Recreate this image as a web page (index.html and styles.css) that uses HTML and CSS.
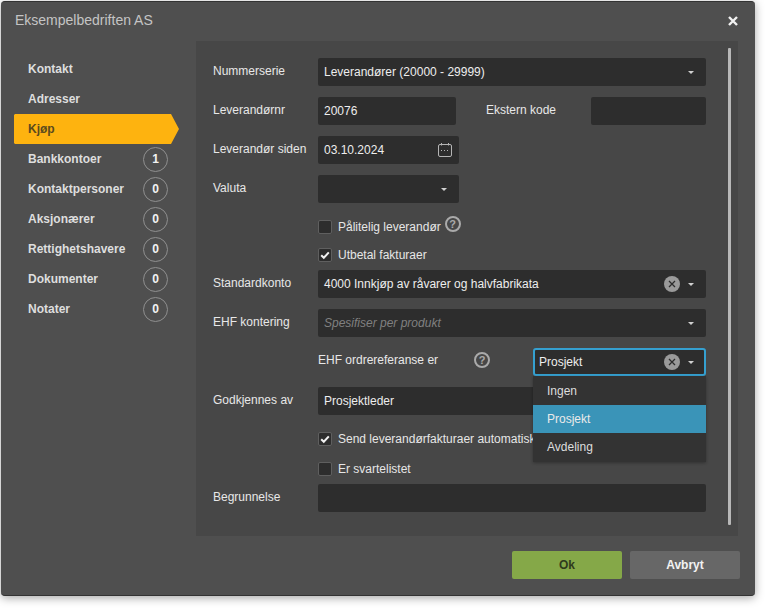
FILE: index.html
```html
<!DOCTYPE html>
<html lang="no">
<head>
<meta charset="utf-8">
<title>Eksempelbedriften AS</title>
<link rel="stylesheet" href="styles.css">
</head>
<body>
<div class="dialog">
  <header class="head">
    <span class="title">Eksempelbedriften AS</span>
    <svg class="close" width="12" height="12" viewBox="0 0 12 12"><path d="M2 2l8 8M10 2l-8 8" stroke="#f2f2f2" stroke-width="2.4" fill="none"/></svg>
  </header>
  <div class="main">
    <nav class="nav">
      <a class="item">Kontakt</a>
      <a class="item">Adresser</a>
      <a class="item active">Kjøp</a>
      <a class="item">Bankkontoer<b class="badge">1</b></a>
      <a class="item">Kontaktpersoner<b class="badge">0</b></a>
      <a class="item">Aksjonærer<b class="badge">0</b></a>
      <a class="item">Rettighetshavere<b class="badge">0</b></a>
      <a class="item">Dokumenter<b class="badge">0</b></a>
      <a class="item">Notater<b class="badge">0</b></a>
    </nav>
    <section class="panel">
      <div class="row">
        <label class="lab">Nummerserie</label>
        <div class="field grow"><span class="val">Leverandører (20000 - 29999)</span><i class="caret"></i></div>
      </div>
      <div class="row">
        <label class="lab">Leverandørnr</label>
        <div class="field w138"><span class="val">20076</span></div>
        <label class="lab ext">Ekstern kode</label>
        <div class="field w115"></div>
      </div>
      <div class="row">
        <label class="lab">Leverandør siden</label>
        <div class="field w141"><span class="val">03.10.2024</span>
          <svg class="cal" width="16" height="16" viewBox="0 0 16 16" fill="none" stroke="#b5b5b5"><rect x="1.5" y="2.5" width="13" height="12" rx="1.5"/><path d="M4.5 1v2.5M11.5 1v2.5"/><path d="M4 8.5h2M7 8.5h2M10 8.5h2" stroke-width="1.2" stroke-dasharray="1 1"/></svg>
        </div>
      </div>
      <div class="row">
        <label class="lab">Valuta</label>
        <div class="field w141"><span class="val"></span><i class="caret"></i></div>
      </div>
      <div class="check first"><i class="box"></i><span>Pålitelig leverandør</span><i class="help near">?</i></div>
      <div class="check second"><i class="box"><svg width="14" height="14" viewBox="0 0 14 14"><path class="tick" d="M3.2 7.2l2.6 2.6 5-5.4"/></svg></i><span>Utbetal fakturaer</span></div>
      <div class="row tight">
        <label class="lab">Standardkonto</label>
        <div class="field grow"><span class="val">4000 Innkjøp av råvarer og halvfabrikata</span><i class="clear"><svg width="16" height="16" viewBox="0 0 16 16"><path class="x" d="M5 5l6 6M11 5l-6 6"/></svg></i><i class="caret"></i></div>
      </div>
      <div class="row">
        <label class="lab">EHF kontering</label>
        <div class="field grow"><span class="val ph">Spesifiser per produkt</span><i class="caret"></i></div>
      </div>
      <div class="row ehf">
        <span class="lab sub">EHF ordrereferanse er</span>
        <i class="help">?</i>
        <div class="combo">
          <div class="field focus"><span class="val">Prosjekt</span><i class="clear"><svg width="16" height="16" viewBox="0 0 16 16"><path class="x" d="M5 5l6 6M11 5l-6 6"/></svg></i><i class="caret"></i></div>
          <ul class="menu">
            <li>Ingen</li>
            <li class="sel">Prosjekt</li>
            <li>Avdeling</li>
          </ul>
        </div>
      </div>
      <div class="row">
        <label class="lab">Godkjennes av</label>
        <div class="field grow"><span class="val">Prosjektleder</span><i class="caret"></i></div>
      </div>
      <div class="check third"><i class="box"><svg width="14" height="14" viewBox="0 0 14 14"><path class="tick" d="M3.2 7.2l2.6 2.6 5-5.4"/></svg></i><span>Send leverandørfakturaer automatisk</span></div>
      <div class="check fourth"><i class="box"></i><span>Er svartelistet</span></div>
      <div class="row tight">
        <label class="lab">Begrunnelse</label>
        <div class="field grow"></div>
      </div>
      <div class="scroll"></div>
    </section>
  </div>
  <footer class="foot">
    <button class="btn ok">Ok</button>
    <button class="btn cancel">Avbryt</button>
  </footer>
</div>
</body>
</html>
```
FILE: styles.css
```css
* { box-sizing: border-box; }
html, body { margin: 0; padding: 0; background: #fff; }
body { width: 768px; height: 608px; overflow: hidden; font: 12px/16px "Liberation Sans", Arial, sans-serif; color: #e6e6e6; }
.dialog { margin: 1px 0 0 1px; width: 754px; height: 595px; background: #4f4f4f; border-radius: 4px; border-top: 1px solid #333; border-bottom: 1px solid #333; box-shadow: 0 2px 10px rgba(0,0,0,.35); display: flex; flex-direction: column; }
.head { height: 39px; flex: none; display: flex; align-items: center; justify-content: space-between; padding: 0 16px 4px 14px; }
.title { font-size: 14px; color: #c4c4c4; }
.close { display: block; margin-top: 2px; }
.main { flex: none; display: flex; height: 495px; }
.nav { width: 195px; flex: none; padding: 13px 0 0 13px; }
.item { display: flex; align-items: center; justify-content: space-between; height: 30px; width: 154px; padding: 0 0 0 14px; font-weight: bold; color: #dedede; }
.active { width: 165px; background: #feb30f; color: #5a4a1e; clip-path: polygon(1px 0, 157px 0, 165px 50%, 157px 100%, 1px 100%, 0 calc(100% - 1px), 0 1px); }
.badge { width: 25px; height: 25px; border: 1px solid #8f8f8f; border-radius: 50%; display: flex; align-items: center; justify-content: center; color: #f2f2f2; font-size: 12px; }
.panel { position: relative; width: 542px; height: 495px; background: #474747; padding: 17px 32px 0 17px; }
.row { display: flex; align-items: center; height: 28px; margin-bottom: 11px; }
.tight { margin-bottom: 11px; }
.lab { width: 105px; flex: none; margin-top: -3px; color: #e8e8e8; white-space: nowrap; }
.ext { margin-left: 30px; }
.field { position: relative; height: 28px; background: #2d2d2d; border-radius: 2px; display: flex; align-items: center; padding: 0 6px; }
.grow { flex: 1; }
.w138 { width: 138px; }
.w115 { width: 115px; margin-left: 0; }
.w141 { width: 141px; }
.val { flex: 1; color: #eee; white-space: nowrap; }
.ph { color: #808080; font-style: italic; }
.caret { flex: none; width: 0; height: 0; border: 3px solid transparent; border-top: 3px solid #d0d0d0; border-bottom: 0; margin: 0 6px 0 11px; }
.cal { flex: none; margin-right: 0; }
.check { display: flex; align-items: center; margin-left: 105px; height: 16px; }
.first { margin-top: 16px; }
.second { margin-top: 12px; margin-bottom: 7px; }
.third { margin-top: 16px; }
.fourth { margin-top: 14px; margin-bottom: 7px; }
.box { width: 14px; height: 14px; flex: none; background: #2d2d2d; border: 1px solid #5f5f5f; border-radius: 2px; margin-right: 6px; display: block; }
.box svg { display: block; margin: -1px; }
.tick { fill: none; stroke: #f2f2f2; stroke-width: 2; }
.help { width: 16px; height: 16px; flex: none; border: 2px solid #aaa; border-radius: 50%; color: #aaa; font: bold 11px/12px "Liberation Sans", Arial, sans-serif; text-align: center; }
.near { margin: -6px 0 0 4px; }
.ehf { position: relative; margin-left: 0; }
.sub { margin-left: 105px; width: 156px; margin-top: -4px; }
.ehf .help { margin-top: -4px; }
.combo { position: relative; margin-left: 43px; flex: 1; }
.focus { border: 2px solid #35a0d0; padding: 0 4px; border-radius: 3px; }
.clear { flex: none; width: 16px; height: 16px; border-radius: 50%; background: #9a9a9a; display: block; }
.clear + .caret { margin-left: 8px; }
.focus .caret { margin-right: 6px; }
.x { fill: none; stroke: #2d2d2d; stroke-width: 1.3; }
.menu { position: absolute; z-index: 2; top: 28px; left: 0; right: 0; margin: 0; padding: 1px 0; list-style: none; background: #333; box-shadow: 0 1px 3px rgba(0,0,0,.3); }
.menu li { height: 28px; line-height: 28px; padding-left: 14px; color: #ddd; }
.menu .sel { background: #3a94b8; color: #eaeaea; }
.scroll { position: absolute; top: 7px; right: 7px; width: 3px; height: 477px; background: #b8b8b8; border-radius: 1px; }
.foot { flex: none; display: flex; justify-content: flex-end; gap: 8px; padding: 15px 15px 0 0; }
.btn { width: 110px; height: 28px; border: 0; border-radius: 2px; font: bold 12px "Liberation Sans", Arial, sans-serif; }
.ok { background: #85a848; color: #2f3a1c; }
.cancel { background: #676767; color: #f2f2f2; }
```
